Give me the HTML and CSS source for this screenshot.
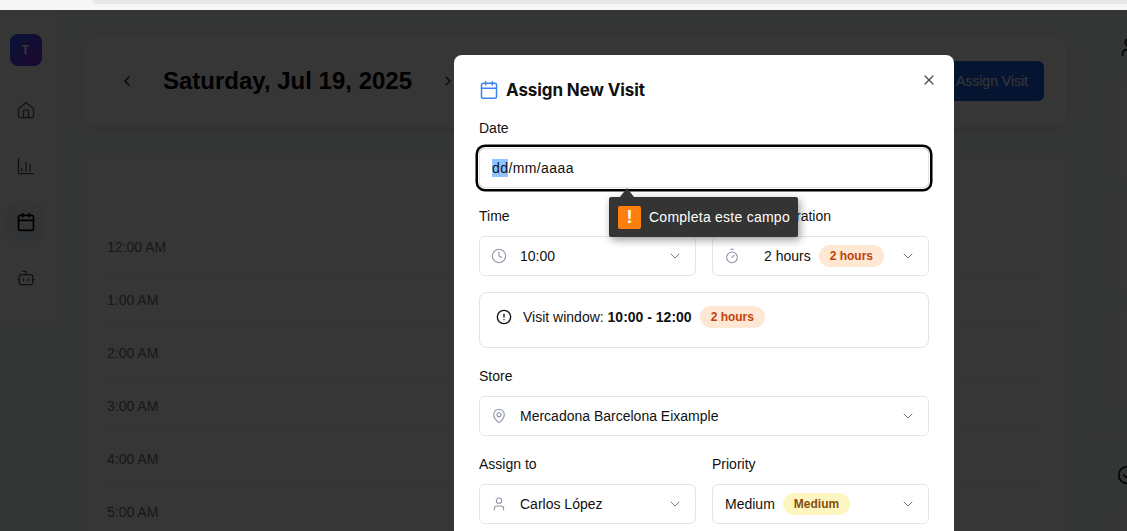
FILE: index.html
```html
<!DOCTYPE html>
<html lang="en">
<head>
    <meta charset="UTF-8">
    <meta name="viewport" content="width=device-width, initial-scale=1.0">
    <title>Assign New Visit</title>
    <link rel="stylesheet" href="styles.css">
</head>
<body>
    <div class="browser-bar"><div class="url-bar"></div></div>
    <div class="app">
        <div class="sidebar">
            <div class="logo">T</div>
            <a class="nav-item">
                <svg viewBox="0 0 24 24"><path d="M3 10.500 12 3l9 7.500V19a2 2 0 0 1-2 2H5a2 2 0 0 1-2-2z"/><path d="M9 21v-8a1 1 0 0 1 1-1h4a1 1 0 0 1 1 1v8"/></svg>
            </a>
            <a class="nav-item">
                <svg viewBox="0 0 24 24"><path d="M3 3v18h18"/><path d="M7 18v-3"/><path d="M12 18V8"/><path d="M17 18v-8"/></svg>
            </a>
            <a class="nav-item active">
                <svg viewBox="0 0 24 24"><path d="M8 2v4"/><path d="M16 2v4"/><rect x="3" y="4" width="18" height="18" rx="2"/><path d="M3 10h18"/></svg>
            </a>
            <a class="nav-item">
                <svg viewBox="0 0 24 24"><path d="M12 8V4H8"/><rect x="4" y="8" width="16" height="12" rx="2"/><path d="M2 14h2"/><path d="M20 14h2"/><path d="M15 13v2"/><path d="M9 13v2"/></svg>
            </a>
        </div>

        <div class="main">
            <div class="date-header">
                <svg class="arrow" viewBox="0 0 24 24"><path d="m15 18-6-6 6-6"/></svg>
                <h1>Saturday, Jul 19, 2025</h1>
                <svg class="arrow" viewBox="0 0 24 24"><path d="m9 18 6-6-6-6"/></svg>
                <button class="assign-btn">Assign Visit</button>
            </div>
            <div class="calendar">
                <div class="hour">12:00 AM</div>
                <div class="hour">1:00 AM</div>
                <div class="hour">2:00 AM</div>
                <div class="hour">3:00 AM</div>
                <div class="hour">4:00 AM</div>
                <div class="hour">5:00 AM</div>
            </div>
        </div>

        <div class="aside">
            <svg class="aside-user" viewBox="0 0 24 24"><path d="M19 21v-2a4 4 0 0 0-4-4H9a4 4 0 0 0-4 4v2"/><circle cx="12" cy="7" r="4"/></svg>
            <div class="aside-card first"></div>
            <div class="aside-card second"></div>
            <div class="aside-card third"></div>
            <div class="aside-rule"></div>
            <svg class="aside-check" viewBox="0 0 24 24"><circle cx="12" cy="12" r="10"/><path d="m8 12 3 3 5-6"/></svg>
            <div class="aside-card fourth"></div>
        </div>

        <div class="overlay"></div>

        <div class="modal">
            <div class="modal-title">
                <svg viewBox="0 0 24 24"><path d="M8 2v4"/><path d="M16 2v4"/><rect x="3" y="4" width="18" height="18" rx="2"/><path d="M3 10h18"/></svg>
                <h2>Assign New Visit</h2>
            </div>
            <svg class="close" viewBox="0 0 24 24"><path d="M18 6 6 18"/><path d="m6 6 12 12"/></svg>

            <div class="label">Date</div>
            <div class="date-input"><span class="selected">dd</span>/mm/aaaa</div>

            <div class="two-col">
                <div>
                    <div class="label">Time</div>
                    <div class="select">
                        <svg class="field-icon" viewBox="0 0 24 24"><circle cx="12" cy="12" r="10"/><path d="M12 6v6l4 2"/></svg>
                        <span>10:00</span>
                        <svg class="chevron" viewBox="0 0 24 24"><path d="m6 9 6 6 6-6"/></svg>
                    </div>
                </div>
                <div>
                    <div class="label">Estimated Duration</div>
                    <div class="select">
                        <svg class="field-icon" viewBox="0 0 24 24"><path d="M10 2h4"/><path d="m12 14 3-3"/><circle cx="12" cy="14" r="8"/></svg>
                        <span class="duration-value">2 hours</span>
                        <span class="badge orange">2 hours</span>
                        <svg class="chevron" viewBox="0 0 24 24"><path d="m6 9 6 6 6-6"/></svg>
                    </div>
                </div>
            </div>

            <div class="visit-window">
                <svg viewBox="0 0 24 24"><circle cx="12" cy="12" r="10"/><path d="M12 8v4"/><path d="M12 16h.01"/></svg>
                <span>Visit window: <b>10:00 - 12:00</b></span>
                <span class="badge orange">2 hours</span>
            </div>

            <div class="label">Store</div>
            <div class="select">
                <svg class="field-icon" viewBox="0 0 24 24"><path d="M20 10c0 5-5.500 10-8 12-2.500-2-8-7-8-12a8 8 0 0 1 16 0z"/><circle cx="12" cy="10" r="3"/></svg>
                <span>Mercadona Barcelona Eixample</span>
                <svg class="chevron" viewBox="0 0 24 24"><path d="m6 9 6 6 6-6"/></svg>
            </div>

            <div class="two-col last">
                <div>
                    <div class="label">Assign to</div>
                    <div class="select">
                        <svg class="field-icon" viewBox="0 0 24 24"><path d="M19 21v-2a4 4 0 0 0-4-4H9a4 4 0 0 0-4 4v2"/><circle cx="12" cy="7" r="4"/></svg>
                        <span>Carlos López</span>
                        <svg class="chevron" viewBox="0 0 24 24"><path d="m6 9 6 6 6-6"/></svg>
                    </div>
                </div>
                <div>
                    <div class="label">Priority</div>
                    <div class="select">
                        <span class="priority-value">Medium</span>
                        <span class="badge yellow">Medium</span>
                        <svg class="chevron" viewBox="0 0 24 24"><path d="m6 9 6 6 6-6"/></svg>
                    </div>
                </div>
            </div>

            <div class="tooltip">
                <span class="tooltip-icon">!</span>
                <span class="tooltip-text">Completa este campo</span>
            </div>
        </div>
    </div>
</body>
</html>
```

FILE: styles.css
```css
html, body {
    height: 100%;
}
body {
    margin: 0;
    font-family: "Liberation Sans", Arial, sans-serif;
    font-size: 14px;
    color: #111827;
    overflow: hidden;
    background-color: #f7f7f8;
}
svg {
    fill: none;
    stroke: currentColor;
    stroke-width: 2;
    stroke-linecap: round;
    stroke-linejoin: round;
    flex-shrink: 0;
}

.browser-bar {
    height: 10px;
    background-color: #f7f7f8;
}
.url-bar {
    height: 4px;
    margin-left: 92px;
    background-color: #e8e8ea;
    border-bottom-left-radius: 6px;
}

.app {
    position: relative;
    height: 521px;
    display: flex;
    overflow: hidden;
    background-color: #f6faf8;
}

.sidebar {
    width: 57px;
    height: 312px;
    box-sizing: border-box;
    padding: 24px 5px 0 0;
    display: flex;
    flex-direction: column;
    align-items: center;
    background-color: #f9fcfa;
    border-right: 1px solid #f0f2f1;
    border-bottom: 1px solid #f0f2f1;
    flex-shrink: 0;
}
.logo {
    width: 32px;
    height: 32px;
    border-radius: 8px;
    background: linear-gradient(135deg, #2b5cff, #8a2be2);
    color: white;
    font-weight: bold;
    font-size: 12px;
    display: flex;
    align-items: center;
    justify-content: center;
    margin-bottom: 24px;
}
.nav-item {
    width: 40px;
    height: 40px;
    margin-bottom: 16px;
    border-radius: 12px;
    display: flex;
    align-items: center;
    justify-content: center;
    color: #4b5563;
}
.nav-item svg {
    width: 20px;
    height: 20px;
    stroke-width: 1.5;
}
.nav-item.active {
    background-color: #eff3f8;
    color: #000;
}
.nav-item.active svg {
    stroke-width: 2;
}

.main {
    width: 984px;
    margin-left: 26px;
    padding-top: 25px;
    flex-shrink: 0;
}
.date-header {
    height: 92px;
    box-sizing: border-box;
    padding: 0 23px 0 36px;
    display: flex;
    align-items: center;
    background-color: white;
    border-radius: 16px;
    box-shadow: 0 2px 10px rgba(0, 0, 0, 0.1);
}
.date-header h1 {
    margin: 0 28px;
    width: 249px;
    font-size: 24px;
    line-height: 32px;
    white-space: nowrap;
    color: #000;
}
.arrow {
    width: 16px;
    height: 16px;
}
.assign-btn {
    margin-left: auto;
    width: 148px;
    height: 40px;
    border: none;
    border-radius: 6px;
    background-color: #1a63e8;
    color: white;
    font-family: inherit;
    font-size: 14px;
    text-align: right;
    padding-right: 16px;
}
.calendar {
    margin-top: 25px;
    height: 420px;
    box-sizing: border-box;
    padding: 67px 23px 0;
    background-color: white;
    border: 1px solid #eef0f1;
    border-radius: 16px;
}
.hour {
    height: 53px;
    box-sizing: border-box;
    padding-top: 19px;
    line-height: 16px;
    color: #6b7280;
    border-bottom: 1px solid #f6f7f8;
}

.aside {
    flex: 1;
    margin-left: 26px;
    position: relative;
}
.aside-user {
    position: absolute;
    left: 25px;
    top: 26px;
    width: 22px;
    height: 22px;
    color: #111827;
}
.aside-card {
    position: absolute;
    left: 24px;
    width: 60px;
    background-color: white;
    border: 1px solid #eceef0;
    border-radius: 12px;
}
.aside-card.first {
    top: 68px;
    height: 100px;
}
.aside-card.second {
    top: 182px;
    height: 100px;
}
.aside-card.third {
    top: 296px;
    height: 100px;
}
.aside-card.fourth {
    top: 499px;
    height: 80px;
}
.aside-rule {
    position: absolute;
    left: 0;
    top: 422px;
    width: 80px;
    border-top: 1px solid #f1f2f4;
}
.aside-check {
    position: absolute;
    left: 24px;
    top: 455px;
    width: 20px;
    height: 20px;
    color: #111827;
}

.overlay {
    position: absolute;
    inset: 0;
    background-color: rgba(0, 0, 0, 0.79);
}

.modal {
    position: absolute;
    left: 454px;
    top: 45px;
    width: 500px;
    height: 600px;
    box-sizing: border-box;
    padding: 63px 25px 0;
    background-color: white;
    border-radius: 8px;
}
.modal-title {
    position: absolute;
    left: 25px;
    top: 23px;
    display: flex;
    align-items: center;
    gap: 7px;
}
.modal-title svg {
    width: 20px;
    height: 20px;
    color: #3b82f6;
    stroke-width: 1.8;
}
.modal-title h2 {
    margin: 0;
    font-family: Inter, "Liberation Sans", sans-serif;
    font-size: 17px;
    line-height: 24px;
    font-weight: 700;
    letter-spacing: -0.1px;
    color: #111;
}
.close {
    position: absolute;
    left: 467px;
    top: 17px;
    width: 16px;
    height: 16px;
    color: #4b5563;
}
.label {
    height: 20px;
    line-height: 20px;
    margin-bottom: 10px;
    color: #111;
    white-space: nowrap;
}
.date-input {
    height: 40px;
    box-sizing: border-box;
    padding-left: 12px;
    line-height: 38px;
    letter-spacing: 0.4px;
    border: 1px solid #e5e5e5;
    border-radius: 6px;
    box-shadow: 0 0 0 1px white, 0 0 0 3.5px #000;
    margin-bottom: 18px;
    color: #111;
}
.selected {
    background-color: #8fc4ff;
    padding: 1px 0;
}
.two-col {
    display: grid;
    grid-template-columns: 217px 217px;
    gap: 16px;
    margin-bottom: 16px;
}
.two-col.last {
    margin-top: 18px;
}
.select {
    height: 40px;
    box-sizing: border-box;
    padding: 0 12px 0 11px;
    display: flex;
    align-items: center;
    border: 1px solid #e5e5e5;
    border-radius: 6px;
    color: #111;
}
.field-icon {
    width: 16px;
    height: 16px;
    margin-right: 13px;
    color: #8a93a6;
    stroke-width: 1.6;
}
.duration-value {
    margin-left: 11px;
}
.priority-value {
    margin-left: 1px;
}
.chevron {
    width: 16px;
    height: 16px;
    margin-left: auto;
    color: #7b7f86;
    stroke-width: 1.5;
}
.badge {
    margin-left: 8px;
    height: 22px;
    padding: 0 11px;
    border-radius: 11px;
    font-size: 12px;
    font-weight: bold;
    line-height: 22px;
    display: inline-block;
}
.badge.orange {
    background-color: #fee8d3;
    color: #c2410c;
}
.badge.yellow {
    background-color: #fef6c0;
    color: #854d0e;
}
.visit-window {
    height: 56px;
    box-sizing: border-box;
    padding: 0 16px 6px;
    display: flex;
    align-items: center;
    border: 1px solid #e5e5e5;
    border-radius: 8px;
    margin-bottom: 18px;
    color: #111;
}
.visit-window svg {
    width: 16px;
    height: 16px;
    margin-right: 11px;
}
.tooltip {
    position: absolute;
    left: 155px;
    top: 142px;
    height: 40px;
    width: 189px;
    box-sizing: border-box;
    padding-left: 9px;
    display: flex;
    align-items: center;
    gap: 8px;
    background-color: #343434;
    color: white;
    border-radius: 2px;
    box-shadow: 2px 3px 8px rgba(0, 0, 0, 0.4);
}
.tooltip::before {
    content: "";
    position: absolute;
    left: 11px;
    top: -9px;
    border-left: 7px solid transparent;
    border-right: 7px solid transparent;
    border-bottom: 9px solid #343434;
}
.tooltip-icon {
    width: 23px;
    height: 23px;
    border-radius: 2px;
    background-color: #ff7f0e;
    color: white;
    font-weight: bold;
    font-size: 18px;
    line-height: 23px;
    text-align: center;
}
.tooltip-text {
    letter-spacing: 0.25px;
}
```
